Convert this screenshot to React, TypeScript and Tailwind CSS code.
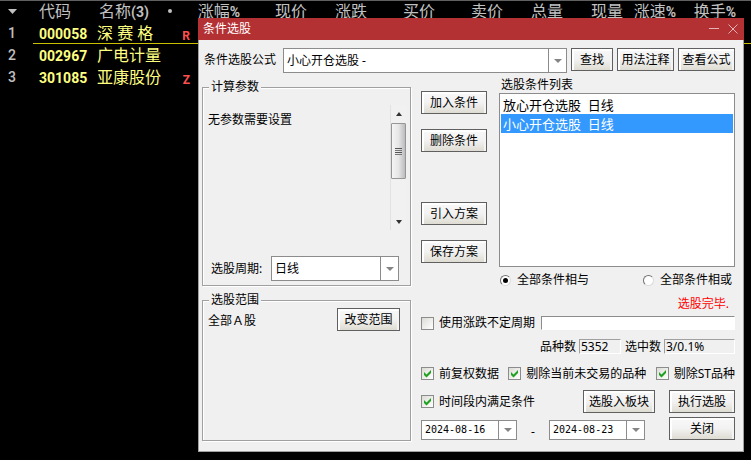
import { useState, type ReactNode } from 'react';

const columns: [string, string, string][] = [
  ['涨幅', '%', 'w-[50px]'],
  ['现价', '', 'w-[67px]'],
  ['涨跌', '', 'w-[60px]'],
  ['买价', '', 'w-[68px]'],
  ['卖价', '', 'w-[68px]'],
  ['总量', '', 'w-[60px]'],
  ['现量', '', 'w-[60px]'],
  ['涨速', '%', 'w-[53px]'],
  ['换手', '%', 'w-[60px]'],
];

const stocks = [
  { code: '000058', name: '深 赛 格', mark: 'R', active: true },
  { code: '002967', name: '广电计量', mark: '', active: false },
  { code: '301085', name: '亚康股份', mark: 'Z', active: false },
];

function Latin({ children }: { children: ReactNode }) {
  return <span className="font-[Roboto,sans-serif] text-[14px] font-bold">{children}</span>;
}

function QuoteTable() {
  return (
    <table className="w-full table-fixed border-collapse text-[16px] leading-5 text-[#c0c0c0]">
      <thead>
        <tr className="h-[22px] whitespace-nowrap">
          <th className="w-[33px] p-0">
            <svg className="ml-2 block" width="9" height="5" viewBox="0 0 9 5">
              <path d="M0 0H9L4.5 5Z" fill="#c0c0c0" />
            </svg>
          </th>
          <th className="w-[62px] p-0 pl-[6px] text-left font-normal">代码</th>
          <th className="w-[70px] p-0 pl-1 text-left font-normal">
            名称<Latin>(3)</Latin>
          </th>
          <th className="w-[25px] p-0 pl-[3px]">
            <span className="block size-1 rounded-full bg-[#c0c0c0]" />
          </th>
          {columns.map(([label, unit, width]) => (
            <th key={label} className={`${width} p-0 text-right font-normal`}>
              {label}
              {unit && <Latin>{unit}</Latin>}
            </th>
          ))}
          <th className="p-0" />
        </tr>
      </thead>
      <tbody>
        {stocks.map((s, i) => (
          <tr key={s.code} className="h-[22px] whitespace-nowrap text-[#ffff80]">
            <td className="p-0 pl-2 font-[Roboto,sans-serif] text-[14px] font-medium text-[#c0c0c0]">{i + 1}</td>
            <td className={`p-0 pl-[6px] ${s.active ? 'shadow-[inset_0_-1px_0_#c8c000]' : ''}`}>
              <Latin>{s.code}</Latin>
            </td>
            <td className={`p-0 pl-[2px] ${s.active ? 'shadow-[inset_0_-1px_0_#c8c000]' : ''}`}>{s.name}</td>
            <td
              className={`p-0 pt-[6px] text-right font-[Roboto,sans-serif] text-[12px] leading-4 font-bold text-[#ff5050] ${s.active ? 'shadow-[inset_0_-1px_0_#c8c000]' : ''}`}
            >
              {s.mark}
            </td>
            <td colSpan={10} className={`p-0 ${s.active ? 'shadow-[inset_0_-1px_0_#c8c000]' : ''}`} />
          </tr>
        ))}
      </tbody>
    </table>
  );
}

function Button({ children, width }: { children: ReactNode; width: string }) {
  return (
    <button
      type="button"
      className={`${width} h-[23px] shrink-0 border border-[#606060] bg-linear-to-b from-[#f8f8f8] via-[#f2f2f2] to-[#dedcd2] text-center leading-[19px] whitespace-nowrap shadow-[inset_2px_2px_0_#fff,inset_-2px_0_0_#f4f4f4]`}
    >
      {children}
    </button>
  );
}

function Dropdown({
  id,
  label,
  options,
  size,
  font = '',
}: {
  id: string;
  label?: string;
  options: string[];
  size: string;
  font?: string;
}) {
  return (
    <div className={`${size} grid border border-[#8c8c8c] bg-white`}>
      <select
        id={id}
        aria-label={label}
        className={`col-start-1 row-start-1 w-full appearance-none bg-transparent pl-[3px] outline-none ${font}`}
      >
        {options.map((o) => (
          <option key={o}>{o}</option>
        ))}
      </select>
      <span className="pointer-events-none col-start-1 row-start-1 flex w-[18px] items-center justify-center justify-self-end border-l border-[#8c8c8c]">
        <svg width="8" height="4" viewBox="0 0 8 4">
          <path d="M0 0H8L4 4Z" fill="#858585" />
        </svg>
      </span>
    </div>
  );
}

function Check({ label, checked = false }: { label: string; checked?: boolean }) {
  return (
    <label className="flex shrink-0 items-center gap-[5px] whitespace-nowrap">
      <span className="grid size-[13px]">
        <input
          type="checkbox"
          defaultChecked={checked}
          className="peer col-start-1 row-start-1 size-[13px] appearance-none border border-[#8c8c8c] bg-linear-to-br from-[#dcdcd6] to-white"
        />
        <svg
          className="pointer-events-none invisible col-start-1 row-start-1 peer-checked:visible"
          width="13"
          height="13"
          viewBox="0 0 13 13"
        >
          <path d="M3 5L5.5 7.5L10 3V6L5.5 10.5L3 8Z" fill="#21a121" />
        </svg>
      </span>
      {label}
    </label>
  );
}

function Radio({ label, checked = false }: { label: string; checked?: boolean }) {
  return (
    <label className="flex items-center gap-[6px] whitespace-nowrap">
      <span className="grid size-[11px] place-items-center">
        <input
          type="radio"
          name="combine"
          defaultChecked={checked}
          className="peer col-start-1 row-start-1 size-[11px] appearance-none rounded-full border border-t-[#707070] border-r-[#dcdcdc] border-b-[#dcdcdc] border-l-[#707070] bg-white"
        />
        <span className="pointer-events-none invisible col-start-1 row-start-1 size-[5px] rounded-full bg-black peer-checked:visible" />
      </span>
      {label}
    </label>
  );
}

function ScrollBar() {
  return (
    <div className="flex h-[125px] w-4 flex-col items-center border-l border-[#e2e2e2] bg-[#f1f1f1]">
      <button type="button" aria-label="向上滚动" className="flex h-[18px] w-full items-center justify-center">
        <svg width="6" height="4" viewBox="0 0 6 4">
          <path d="M3 0L6 4H0Z" fill="#333" />
        </svg>
      </button>
      <div className="flex h-14 w-[15px] flex-col items-center justify-center gap-px rounded-[1px] border border-[#969696] bg-linear-to-r from-[#f5f5f5] via-[#e6e6e6] to-[#bcbcc0]">
        <span className="h-px w-[7px] bg-[#555]" />
        <span className="h-px w-[7px] bg-[#777]" />
        <span className="h-px w-[7px] bg-[#555]" />
        <span className="h-px w-[7px] bg-[#777]" />
      </div>
      <button type="button" aria-label="向下滚动" className="mt-auto flex h-4 w-full items-center justify-center">
        <svg width="6" height="4" viewBox="0 0 6 4">
          <path d="M0 0H6L3 4Z" fill="#333" />
        </svg>
      </button>
    </div>
  );
}

const groupBox =
  'min-w-0 border border-[#a0a0a0] shadow-[1px_1px_0_#fff,inset_1px_1px_0_#fff]';
const groupLegend = 'ml-[6px] bg-[#f0f0f0] px-[2px] leading-4';
const readout =
  'h-[15px] min-w-0 border border-t-[#a0a0a0] border-r-white border-b-white border-l-[#a0a0a0] bg-transparent pl-px leading-[13px] outline-none';

function PickerDialog() {
  const [picked, setPicked] = useState('1');
  return (
    <div
      role="dialog"
      aria-label="条件选股"
      className="absolute top-[18px] right-[7px] left-[198px] bg-[#f0f0f0] text-[12px] leading-4 text-black"
    >
      <div className="flex h-[22px] items-center bg-[#b33033] pr-[6px] pl-[5px] text-white">
        <h1 className="grow">条件选股</h1>
        <button type="button" aria-label="最小化" className="flex h-[18px] w-[15px] items-center justify-center">
          <svg width="10" height="10" viewBox="0 0 10 10">
            <path d="M0 4.5H10" stroke="#e5b3b4" />
          </svg>
        </button>
        <button type="button" aria-label="关闭窗口" className="flex h-[18px] w-[17px] items-center justify-end">
          <svg width="10" height="10" viewBox="0 0 10 10">
            <path d="M.5 .5L9.5 9.5M9.5 .5L.5 9.5" stroke="#e5b3b4" fill="none" />
          </svg>
        </button>
      </div>

      <div className="border border-t-0 border-[#a0a0a0] pt-2 pr-2 pb-[10px] pl-[3px]">
        <div className="flex items-start gap-1">
          <label htmlFor="formula" className="w-[77px] pl-[2px] leading-6 whitespace-nowrap">
            条件选股公式
          </label>
          <Dropdown id="formula" options={['小心开仓选股 -']} size="h-[25px] grow" />
          <Button width="w-[42px]">查找</Button>
          <Button width="w-[57px]">用法注释</Button>
          <Button width="w-[57px]">查看公式</Button>
        </div>

        <div className="mt-[6px] flex gap-[10px]">
          <div className="flex w-[209px] shrink-0 flex-col gap-[6px]">
            <fieldset className={`${groupBox} h-[207px]`}>
              <legend className={groupLegend}>计算参数</legend>
              <div className="flex justify-between pt-[10px] pr-1 pl-[5px]">
                <p className="pt-[7px]">无参数需要设置</p>
                <ScrollBar />
              </div>
              <div className="mt-[26px] flex items-center gap-2 pr-[11px] pl-2">
                <label htmlFor="period" className="w-[52px] whitespace-nowrap">
                  选股周期:
                </label>
                <Dropdown id="period" options={['日线']} size="h-[25px] grow" />
              </div>
            </fieldset>
            <fieldset className={`${groupBox} h-[149px]`}>
              <legend className={groupLegend}>选股范围</legend>
              <div className="flex justify-between pr-[10px] pl-[5px]">
                <p className="pt-[5px]">全部Ａ股</p>
                <Button width="w-[63px]">改变范围</Button>
              </div>
            </fieldset>
          </div>

          <div className="min-w-0 grow">
            <div className="flex gap-3">
              <div className="flex w-[66px] shrink-0 flex-col gap-[15px] pt-3">
                <Button width="w-full">加入条件</Button>
                <Button width="w-full">删除条件</Button>
                <div className="mt-[35px] flex flex-col gap-[15px]">
                  <Button width="w-full">引入方案</Button>
                  <Button width="w-full">保存方案</Button>
                </div>
              </div>
              <div className="min-w-0 grow">
                <label htmlFor="conditions" className="block pl-[2px] leading-3">
                  选股条件列表
                </label>
                <select
                  id="conditions"
                  size={9}
                  value={picked}
                  onChange={(e) => setPicked(e.target.value)}
                  className="mt-[2px] block h-[174px] w-full overflow-hidden border border-[#8c8c8c] bg-white p-px text-[13px] outline-none"
                >
                  {['放心开仓选股', '小心开仓选股'].map((name, i) => (
                    <option
                      key={name}
                      value={String(i)}
                      className="h-[19px] min-h-0 p-0 pl-[2px] leading-[19px] checked:bg-linear-to-r checked:from-[#3399ff] checked:to-[#3399ff] checked:[-webkit-text-fill-color:white]"
                    >
                      {name + '\u00a0\u00a0日线'}
                    </option>
                  ))}
                </select>
                <div className="flex h-[26px] items-center justify-between pr-[3px] pl-px">
                  <Radio label="全部条件相与" checked />
                  <Radio label="全部条件相或" />
                </div>
              </div>
            </div>

            <p className="pt-px pr-[6px] text-right leading-5 text-[#ff0000]">选股完毕.</p>

            <div className="mt-[2px] flex h-[14px] items-center gap-[6px]">
              <Check label="使用涨跌不定周期" />
              <input
                aria-label="不定周期"
                className="h-[14px] min-w-0 grow border border-t-[#8c8c8c] border-r-white border-b-white border-l-[#8c8c8c] bg-white outline-none"
              />
            </div>

            <div className="mt-[9px] flex h-[15px] items-center justify-end gap-[3px] whitespace-nowrap">
              <label htmlFor="total">品种数</label>
              <input id="total" readOnly value="5352" className={`${readout} w-[42px]`} />
              <label htmlFor="hits" className="pl-px">
                选中数
              </label>
              <input id="hits" readOnly value="3/0.1%" className={`${readout} w-[71px]`} />
            </div>

            <div className="mt-3 flex h-[15px] items-center justify-between">
              <Check label="前复权数据" checked />
              <Check label="剔除当前未交易的品种" checked />
              <Check label="剔除ST品种" checked />
            </div>

            <div className="mt-[9px] flex items-center">
              <Check label="时间段内满足条件" checked />
              <div className="ml-auto flex gap-[14px]">
                <Button width="w-[72px]">选股入板块</Button>
                <Button width="w-[66px]">执行选股</Button>
              </div>
            </div>

            <div className="mt-1 flex items-end">
              <Dropdown
                id="from"
                label="开始日期"
                options={['2024-08-16']}
                size="h-5 w-24"
                font="font-['DejaVu_Sans_Mono',monospace] text-[10px]"
              />
              <span className="w-8 text-center">-</span>
              <Dropdown
                id="to"
                label="结束日期"
                options={['2024-08-23']}
                size="h-5 w-24"
                font="font-['DejaVu_Sans_Mono',monospace] text-[10px]"
              />
              <div className="ml-auto">
                <Button width="w-[66px]">关闭</Button>
              </div>
            </div>
          </div>
        </div>
      </div>
    </div>
  );
}

export default function App() {
  return (
    <main className="relative min-h-screen overflow-hidden bg-black font-['Noto_Sans','Noto_Sans_CJK_SC',sans-serif] shadow-[inset_0_1px_0_#606060]">
      <QuoteTable />
      <PickerDialog />
    </main>
  );
}
